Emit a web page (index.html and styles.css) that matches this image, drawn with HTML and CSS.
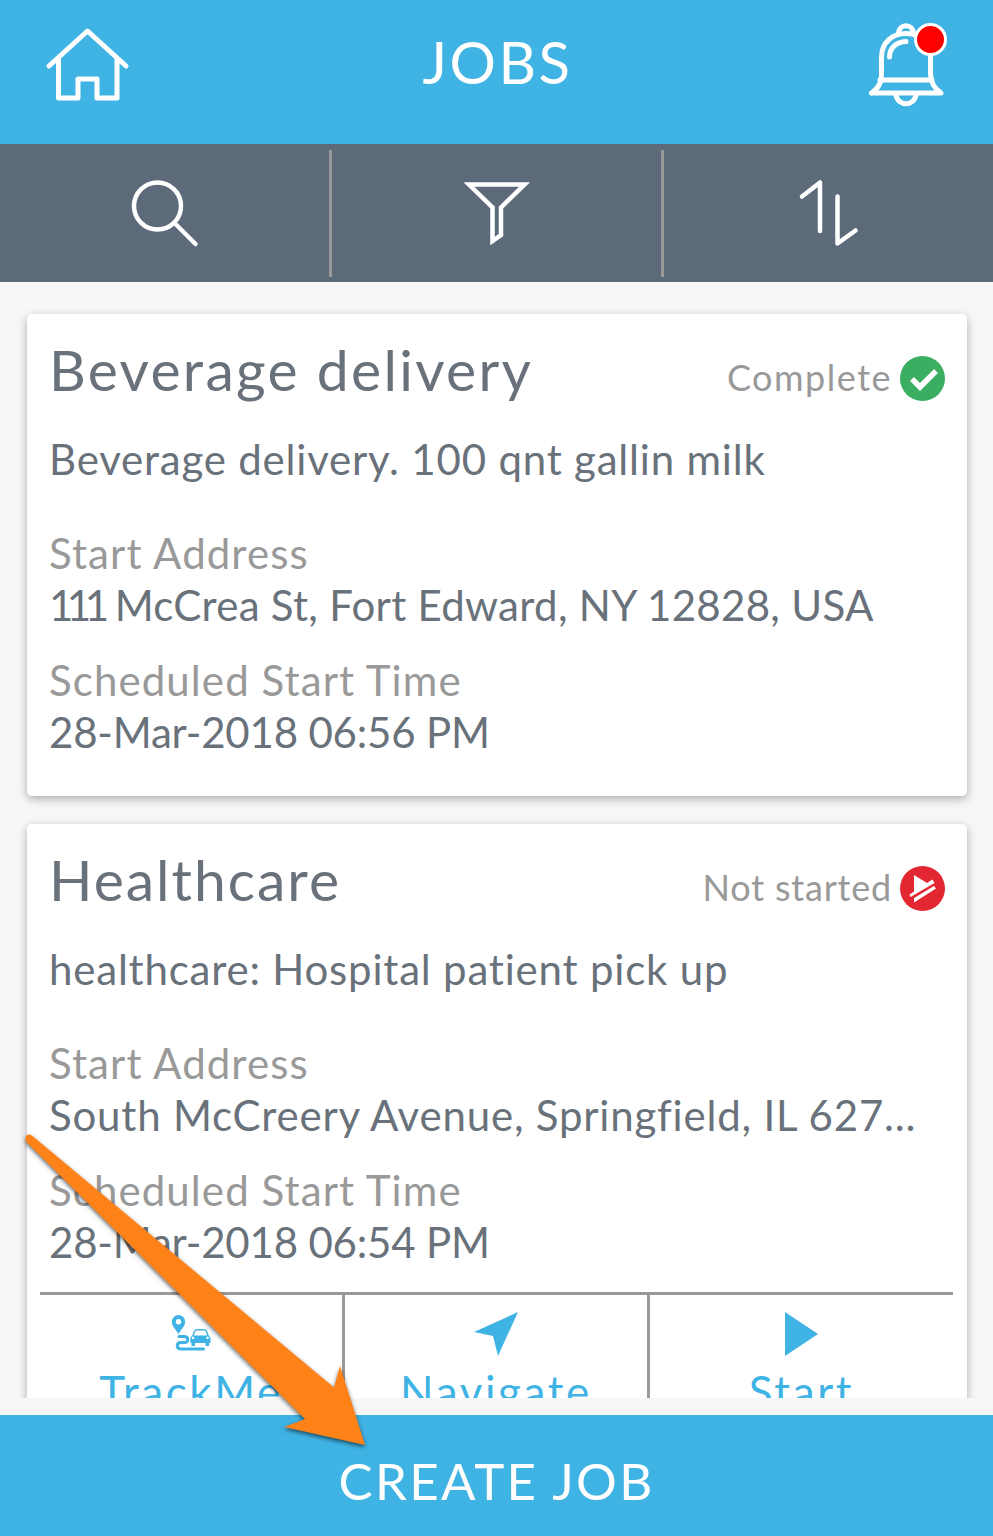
FILE: index.html
```html
<!DOCTYPE html>
<html lang="en">
<head>
  <meta charset="UTF-8">
  <title>Jobs</title>
  <link rel="stylesheet" href="styles.css">
</head>
<body>
  <div class="app">
    <!-- Top bar -->
    <header class="header">
      <svg class="home-icon" width="88" height="80" viewBox="44 24 88 80">
        <path d="M49 66 L87.5 31 L126 66 M58.5 59 V98 H78 V79 H97 V98 H117 V59" />
      </svg>
      <h1 class="header-title">JOBS</h1>
      <svg class="bell-icon" width="82" height="88" viewBox="867 20 82 88">
        <path d="M871.500 93 H941 C934 88 931 83 930.500 73 V48 M871.500 93 C879 88 882 82 881.500 70 V57 C881.500 42 893 33.500 906 33.500 C914 33.500 921 36 926 42 M880 80 H932 M889.500 57 C889.500 48 896 42 906 41.500 M898.500 34 C898.500 23 913.500 23 913.500 34 M896 95 C898 106.500 914 106.500 916 95" />
        <circle class="bell-badge" cx="930.5" cy="39.5" r="15" />
      </svg>
    </header>

    <!-- Search, filter and sort -->
    <nav class="toolbar">
      <button class="tool">
        <svg width="70" height="70" viewBox="130 179 70 70">
          <circle cx="157.500" cy="206" r="23.500" />
          <path d="M174.500 223 L195.500 244" />
        </svg>
      </button>
      <button class="tool">
        <svg class="sharp" width="70" height="70" viewBox="462 179 70 70">
          <path d="M469 184.500 H524.500 L501 207.500 V235 L492.500 241 V207.500 Z" />
        </svg>
      </button>
      <button class="tool">
        <svg width="70" height="70" viewBox="794 179 70 70">
          <path d="M802 196.500 L820 182.500 V231 M837.500 196.500 V243.500 L855.500 230.500" />
        </svg>
      </button>
    </nav>

    <!-- Job list -->
    <main class="job-list">
      <section class="card">
        <div class="card-head">
          <h2 class="card-title">Beverage delivery</h2>
          <div class="status status-complete">
            <span>Complete</span>
            <svg width="45" height="45" viewBox="0 0 45 45">
              <circle cx="22.500" cy="22.500" r="22.500" fill="#3cae62" />
              <path d="M12 23 L20 31 L36 15" fill="none" stroke="#fff" stroke-width="5.500" />
            </svg>
          </div>
        </div>
        <p class="description">Beverage delivery. 100 qnt gallin milk</p>
        <dl class="details">
          <dt>Start Address</dt>
          <dd><span class="street-number">111</span> McCrea St, Fort Edward, NY 12828, USA</dd>
          <dt>Scheduled Start Time</dt>
          <dd class="time">28-Mar-2018 06:56 PM</dd>
        </dl>
      </section>

      <section class="card">
        <div class="card-head">
          <h2 class="card-title title-short">Healthcare</h2>
          <div class="status">
            <span>Not started</span>
            <svg width="45" height="45" viewBox="0 0 45 45">
              <circle cx="22.500" cy="22.500" r="22.500" fill="#e22732" />
              <path d="M14 9 L27 17 L32.500 13.500 L34.500 17 L10.500 31 L9.500 28.500 L14 25.500 Z M34 20 L36 22.500 L14 36.500 V32 Z" fill="#fff" />
            </svg>
          </div>
        </div>
        <p class="description">healthcare: Hospital patient pick up</p>
        <dl class="details">
          <dt>Start Address</dt>
          <dd class="long-address">South McCreery Avenue, Springfield, IL 627...</dd>
          <dt>Scheduled Start Time</dt>
          <dd class="time">28-Mar-2018 06:54 PM</dd>
        </dl>
        <div class="actions">
          <button class="action">
            <svg width="44" height="44" viewBox="169 1312 44 44">
              <path fill-rule="evenodd" d="M178.500 1334 C175.500 1329 171.800 1326 171.800 1321.800 A6.700 6.700 0 0 1 185.200 1321.800 C185.200 1326 181.500 1329 178.500 1334 Z M178.500 1319 a2.800 2.800 0 1 0 0.010 0 Z" />
              <path d="M179 1336.500 H184 C189 1336.500 189 1342.500 184 1342.500 H181 C176 1342.500 176 1349 181 1349 H203.500" fill="none" stroke="#40b3e5" stroke-width="3" stroke-linecap="round" />
              <path fill-rule="evenodd" d="M192 1336 L194 1331 Q194.700 1329 197 1329 H204 Q206.300 1329 207 1331 L209 1336 Q211 1336.500 210.500 1343 H209 V1346 H205.500 V1343 H195 V1346 H191.500 V1343 H190.500 Q189.500 1336.500 192 1336 Z M193.800 1335.500 H207.200 L205.500 1331 Q205.200 1330.400 204 1330.400 H197 Q195.800 1330.400 195.500 1331 Z M193 1336.500 a1.300 1.300 0 1 0 0.010 0 Z M207.500 1336.500 a1.300 1.300 0 1 0 0.010 0 Z" />
            </svg>
            <span>TrackMe</span>
          </button>
          <button class="action">
            <svg width="44" height="44" viewBox="474 1312 44 44">
              <path d="M518 1312 L474 1332 L493 1336 L498 1356 Z" />
            </svg>
            <span>Navigate</span>
          </button>
          <button class="action">
            <svg width="34" height="44" viewBox="0 0 34 44">
              <path d="M0 0 L33 22 L0 44 Z" />
            </svg>
            <span>Start</span>
          </button>
        </div>
      </section>
    </main>

    <!-- Footer button -->
    <button class="create-job">CREATE JOB</button>

    <!-- Arrow pointing at the create button -->
    <svg class="pointer" width="360" height="330" viewBox="15 1125 360 330">
      <path d="M25.500 1139.500 Q25.500 1134 30 1134.500 L33 1136.500 L334 1387.500 L340 1366 L365 1445 L284 1427 L305 1419 L26.500 1142 Z" />
    </svg>
  </div>
</body>
</html>
```
FILE: styles.css
```css
/* Body style */
body {
  margin: 0;
  font-family: Lato, 'Open Sans', sans-serif;
  background-color: #f7f7f7;
  color: #69717a;
}

button {
  margin: 0;
  padding: 0;
  border: none;
  background: none;
  font-family: inherit;
}

svg {
  display: block;
  flex: none;
}

.app {
  position: relative;
  display: flex;
  flex-direction: column;
  height: 1536px;
  overflow: hidden;
}

/* Top bar */
.header {
  display: flex;
  align-items: flex-start;
  justify-content: space-between;
  box-sizing: border-box;
  height: 144px;
  padding: 20px 44px 0;
  flex: none;
  background-color: #40b3e5;
}

.home-icon,
.bell-icon {
  fill: none;
  stroke: #fff;
  stroke-width: 5;
  stroke-linecap: round;
  stroke-linejoin: round;
}

.home-icon {
  margin-top: 4px;
}

.bell-icon .bell-badge {
  fill: #f00;
  stroke-width: 3;
}

.header-title {
  margin: 7px 4px 0 0;
  font-size: 58px;
  line-height: 70px;
  font-weight: 400;
  letter-spacing: 2.5px;
  color: #fff;
}

/* Search, filter and sort bar */
.toolbar {
  display: grid;
  grid-template-columns: 332px 332px 1fr;
  box-sizing: border-box;
  height: 138px;
  padding: 6px 0 5px;
  flex: none;
  background-color: #5c6a7a;
}

.tool {
  display: flex;
  align-items: center;
  justify-content: center;
  border-right: 3px solid #999;
}

.tool:last-child {
  border-right: none;
}

.tool svg {
  fill: none;
  stroke: #fff;
  stroke-width: 4.5;
  stroke-linecap: round;
  stroke-linejoin: round;
}

.tool .sharp {
  stroke-linejoin: miter;
}

/* Job list */
.job-list {
  display: flex;
  flex-direction: column;
  gap: 28px;
  box-sizing: border-box;
  height: 1116px;
  padding: 32px 26px 0 27px;
  flex: none;
  overflow: hidden;
}

.card {
  box-sizing: border-box;
  min-height: 482px;
  padding: 26px 22px 0;
  flex: none;
  border-radius: 5px;
  background-color: #fff;
  box-shadow: 0 3px 10px rgba(0, 0, 0, 0.3);
}

.card-head {
  display: flex;
  justify-content: space-between;
  height: 61px;
}

.card-title {
  margin: 0;
  font-size: 57px;
  line-height: 58px;
  font-weight: 400;
  letter-spacing: 2.3px;
}

.title-short {
  letter-spacing: 2px;
}

.status {
  display: flex;
  align-items: flex-start;
  gap: 8px;
  padding-top: 16px;
  font-size: 36px;
  line-height: 42px;
  letter-spacing: 0.8px;
  color: #999;
}

.status-complete {
  letter-spacing: 1.5px;
}

.description {
  margin: 32px 0 42px;
  font-size: 42px;
  line-height: 52px;
  letter-spacing: 0.8px;
  white-space: nowrap;
}

.details {
  margin: 0;
  font-size: 42px;
  line-height: 52px;
  white-space: nowrap;
}

.details dt {
  letter-spacing: 1.1px;
  color: #999;
}

.details dd {
  margin: 0 0 23px;
  letter-spacing: 0.3px;
}

.details .long-address {
  letter-spacing: 0.8px;
}

.details .time {
  margin-bottom: 0;
  letter-spacing: -0.2px;
}

.details .street-number {
  margin-right: 1px;
  letter-spacing: -6.5px;
}

/* Actions under the card */
.actions {
  display: grid;
  grid-template-columns: 305px 305px 1fr;
  margin: 24px -8px 0 -9px;
  border-top: 3px solid #999;
}

.action {
  display: flex;
  flex-direction: column;
  align-items: center;
  gap: 9px;
  height: 140px;
  padding-top: 17px;
  border-right: 3px solid #999;
  font-size: 44px;
  line-height: 52px;
  letter-spacing: 2.6px;
  color: #40b3e5;
}

.action:last-child {
  border-right: none;
}

.action svg {
  fill: #40b3e5;
}

/* Footer button */
.create-job {
  height: 121px;
  margin-top: auto;
  padding-top: 9px;
  flex: none;
  background-color: #40b3e5;
  font-size: 51px;
  letter-spacing: 2.3px;
  color: #fff;
}

/* Arrow over the page */
.pointer {
  position: absolute;
  left: 15px;
  top: 1125px;
  fill: #ff8219;
  filter: drop-shadow(0 2px 2px rgba(0, 0, 0, 0.6));
}
```
